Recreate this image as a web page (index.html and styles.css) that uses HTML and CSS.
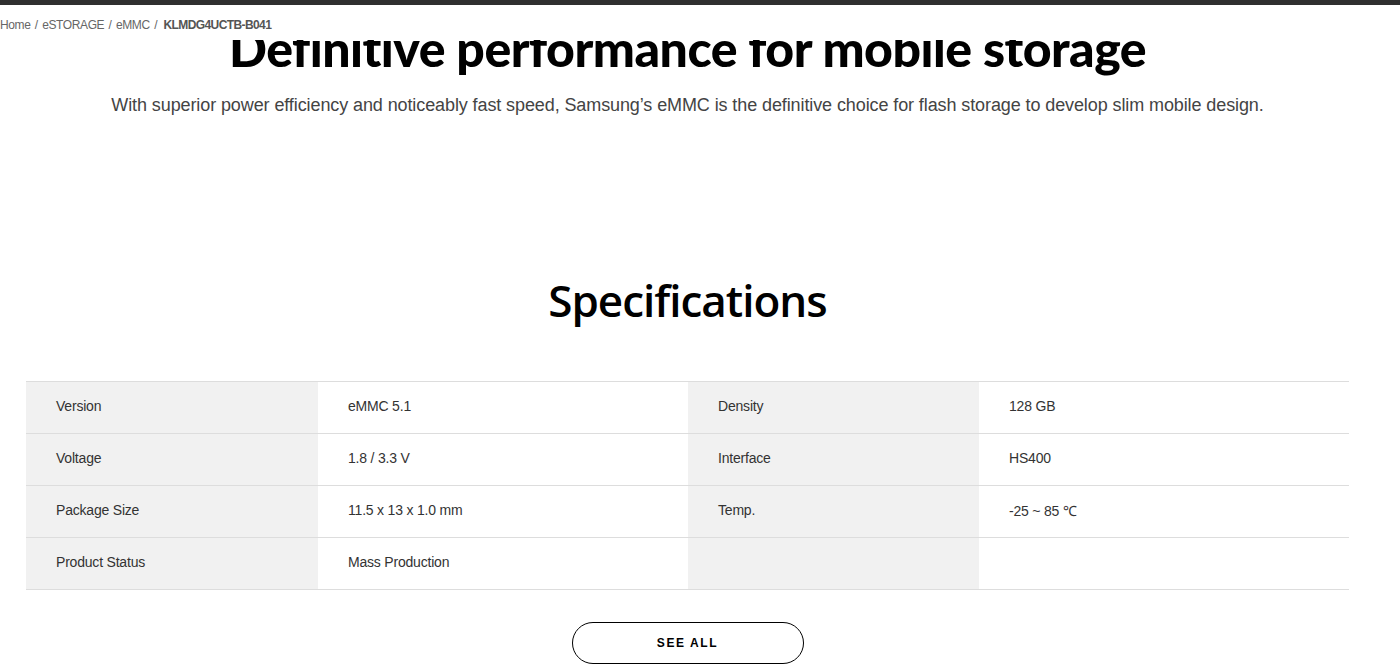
FILE: index.html
```html
<!DOCTYPE html>
<html lang="en">
<head>
<meta charset="utf-8">
<title>KLMDG4UCTB-B041 | eMMC</title>
<link rel="stylesheet" href="styles.css">
</head>
<body>
<header class="site-header">
  <div class="top-bar"></div>
  <nav class="breadcrumb"><a href="#">Home</a> / <a href="#">eSTORAGE</a> / <a href="#">eMMC</a> / <strong>KLMDG4UCTB-B041</strong></nav>
</header>
<main class="page">
  <section class="intro">
    <h1 class="intro-title">Definitive performance for mobile storage</h1>
    <p class="intro-text">With superior power efficiency and noticeably fast speed, Samsung’s eMMC is the definitive choice for flash storage to develop slim mobile design.</p>
  </section>
  <section class="specs">
    <h2 class="specs-title">Specifications</h2>
    <div class="spec-table">
      <div class="spec-row">
        <div class="spec-label">Version</div><div class="spec-value">eMMC 5.1</div>
        <div class="spec-label">Density</div><div class="spec-value">128 GB</div>
      </div>
      <div class="spec-row">
        <div class="spec-label">Voltage</div><div class="spec-value">1.8 / 3.3 V</div>
        <div class="spec-label">Interface</div><div class="spec-value">HS400</div>
      </div>
      <div class="spec-row">
        <div class="spec-label">Package Size</div><div class="spec-value">11.5 x 13 x 1.0 mm</div>
        <div class="spec-label">Temp.</div><div class="spec-value">-25 ~ 85 ℃</div>
      </div>
      <div class="spec-row">
        <div class="spec-label">Product Status</div><div class="spec-value">Mass Production</div>
        <div class="spec-label"></div><div class="spec-value"></div>
      </div>
    </div>
    <div class="actions">
      <a class="btn-outline" href="#">SEE ALL</a>
    </div>
  </section>
</main>
</body>
</html>
```

FILE: styles.css
```css
* { box-sizing: border-box; }
html, body { margin: 0; padding: 0; background: #fff; }
body {
  font-family: "Liberation Sans", Arial, sans-serif;
  color: #000;
  overflow: hidden;
  height: 665px;
}
.site-header { background: #fff; }
.top-bar { height: 5px; background: #2f2f2f; }
.breadcrumb {
  height: 35px;
  padding-top: 13px;
  font-size: 12px;
  line-height: 14px;
  color: #666;
  letter-spacing: -0.4px;
  word-spacing: 1.5px;
  white-space: nowrap;
}
.breadcrumb a { color: #666; text-decoration: none; }
.breadcrumb strong { color: #555; font-weight: bold; letter-spacing: -0.6px; margin-left: 2px; }

.page { width: 1375px; }
.intro { text-align: center; overflow: hidden; }
.intro-title {
  margin: -20px 0 0;
  font-family: "Lato", sans-serif;
  font-weight: 900;
  font-size: 50px;
  line-height: 56px;
  letter-spacing: -0.5px;
}
.intro-text {
  margin: 16px 0 0;
  font-family: "Liberation Sans", sans-serif;
  font-size: 18px;
  line-height: 26px;
  color: #444;
  letter-spacing: -0.1px;
}
.specs { padding-top: 154px; }
.specs-title {
  margin: 0;
  text-align: center;
  font-family: "Open Sans", sans-serif;
  font-weight: 600;
  font-size: 44px;
  line-height: 56px;
  letter-spacing: -1px;
}
.spec-table {
  margin: 53px 26px 0;
  border-top: 1px solid #ddd;
}
.spec-row {
  display: grid;
  grid-template-columns: 292px 370px 291px 370px;
  border-bottom: 1px solid #ddd;
}
.spec-label, .spec-value {
  height: 51px;
  padding: 0 0 3px 30px;
  display: flex;
  align-items: center;
  font-size: 14px;
  color: #333;
  letter-spacing: -0.2px;
}
.spec-label { background: #f1f1f1; }
.spec-value { background: #fff; }
.actions { display: flex; justify-content: center; padding-top: 32px; }
.btn-outline {
  width: 232px;
  height: 42px;
  border: 1px solid #000;
  border-radius: 21px;
  display: flex;
  align-items: center;
  justify-content: center;
  font-size: 12px;
  font-weight: bold;
  letter-spacing: 1.6px;
  color: #000;
  text-decoration: none;
}
```
